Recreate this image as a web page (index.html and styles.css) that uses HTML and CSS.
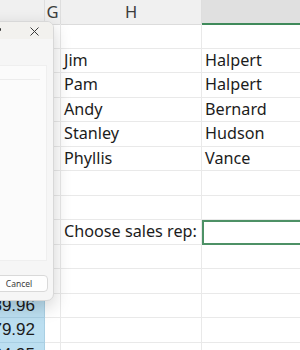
FILE: index.html
```html
<!DOCTYPE html>
<html lang="en">
<head>
    <meta charset="UTF-8">
    <meta name="viewport" content="width=device-width, initial-scale=1.0">
    <title>Sales Reps</title>
    <link rel="stylesheet" href="styles.css">
</head>
<body>
    <!-- Lembar kerja -->
    <div class="sheet">
        <div class="row head">
            <div class="cell"></div>
            <div class="cell">G</div>
            <div class="cell">H</div>
            <div class="cell active-col"></div>
        </div>
        <div class="row"><div class="cell"></div><div class="cell"></div><div class="cell"></div><div class="cell"></div></div>
        <div class="row"><div class="cell"></div><div class="cell"></div><div class="cell">Jim</div><div class="cell">Halpert</div></div>
        <div class="row"><div class="cell"></div><div class="cell"></div><div class="cell">Pam</div><div class="cell">Halpert</div></div>
        <div class="row"><div class="cell"></div><div class="cell"></div><div class="cell">Andy</div><div class="cell">Bernard</div></div>
        <div class="row"><div class="cell"></div><div class="cell"></div><div class="cell">Stanley</div><div class="cell">Hudson</div></div>
        <div class="row"><div class="cell"></div><div class="cell"></div><div class="cell">Phyllis</div><div class="cell">Vance</div></div>
        <div class="row"><div class="cell"></div><div class="cell"></div><div class="cell"></div><div class="cell"></div></div>
        <div class="row"><div class="cell"></div><div class="cell"></div><div class="cell"></div><div class="cell"></div></div>
        <div class="row"><div class="cell"></div><div class="cell"></div><div class="cell">Choose sales rep:</div><div class="cell selected"></div></div>
        <div class="row"><div class="cell"></div><div class="cell"></div><div class="cell"></div><div class="cell"></div></div>
        <div class="row"><div class="cell"></div><div class="cell"></div><div class="cell"></div><div class="cell"></div></div>
        <div class="row"><div class="cell num">89.96</div><div class="cell"></div><div class="cell"></div><div class="cell"></div></div>
        <div class="row"><div class="cell num">79.92</div><div class="cell"></div><div class="cell"></div><div class="cell"></div></div>
        <div class="row"><div class="cell num">64.95</div><div class="cell"></div><div class="cell"></div><div class="cell"></div></div>
    </div>

    <!-- Dialog di atas lembar kerja -->
    <div class="dialog">
        <div class="dialog-title">
            <span class="title-dot"></span>
            <svg class="close" width="9" height="9" viewBox="0 0 9 9">
                <path d="M0.5 0.5 L8.5 8.5 M8.5 0.5 L0.5 8.5" stroke="#3a3a3a" stroke-width="1"/>
            </svg>
        </div>
        <div class="dialog-body">
            <div class="panel">
                <div class="panel-line"></div>
            </div>
            <div class="dialog-buttons">
                <button class="cancel-btn">Cancel</button>
            </div>
        </div>
    </div>
</body>
</html>
```

FILE: styles.css
```css
/* Umum */
* {
    box-sizing: border-box;
}
body {
    margin: 0;
    width: 300px;
    height: 350px;
    overflow: hidden;
    position: relative;
    background-color: #ffffff;
    font-family: "Noto Sans", sans-serif;
    color: #1c1c1c;
}

/* Lembar kerja */
.sheet {
    width: 300px;
    overflow: hidden;
}
.row {
    display: grid;
    grid-template-columns: 45px 16px 141px 138px;
    height: 24.5px;
}
.cell {
    border-right: 1px solid #e9e9e9;
    border-bottom: 1px solid #e9e9e9;
    font-size: 16.2px;
    line-height: 23px;
    padding-left: 3px;
    white-space: nowrap;
}
.row.head {
    height: 24px;
    background-color: #f0f0f0;
}
.head .cell {
    text-align: center;
    padding-left: 0;
    color: #3c3c3c;
    font-size: 16.5px;
    line-height: 24px;
    border-bottom: 1px solid #dcdcdc;
    border-right: 1px solid #dedede;
}
.head .active-col {
    background-color: #e0e0e0;
    border-bottom: 2px solid #3f8a5a;
}
.selected {
    outline: 2px solid #4d9166;
    outline-offset: -2px;
}
.num {
    background-color: #bcdff1;
    border-right: 1px solid #a9cfe3;
    border-bottom: 1px solid #a9cfe3;
    font-family: "Liberation Sans", Arial, sans-serif;
    font-size: 17px;
    text-align: right;
    padding-right: 9px;
    padding-left: 0;
    overflow: hidden;
    direction: rtl;
}

/* Dialog */
.dialog {
    position: absolute;
    left: -70px;
    top: 21px;
    width: 124px;
    height: 280px;
    background-color: #f6f6f6;
    border: 1px solid #d8d8d8;
    border-radius: 7px;
    box-shadow: 0 6px 18px rgba(0, 0, 0, 0.18);
    display: flex;
    flex-direction: column;
    overflow: hidden;
}
.dialog-title {
    height: 19px;
    background-color: #f2f1ee;
    display: flex;
    align-items: center;
    justify-content: flex-end;
    padding-right: 14px;
    padding-top: 1px;
    gap: 29px;
}
.title-dot {
    width: 2px;
    height: 3px;
    background-color: #333;
    border-radius: 1px;
    margin-top: -4px;
}
.close {
    display: block;
}
.dialog-body {
    flex: 1;
    display: flex;
    flex-direction: column;
    padding: 26px 6px 8px 0;
}
.panel {
    height: 196px;
    background-color: #fbfbfb;
    border: 1px solid #efefef;
    padding-top: 13px;
}
.panel-line {
    border-top: 1px solid #ececec;
    margin: 0 6px 0 0;
}
.dialog-buttons {
    margin-top: 14px;
    display: flex;
    justify-content: flex-end;
}
button {
    cursor: pointer;
}
.cancel-btn {
    width: 70px;
    height: 17px;
    padding: 0;
    padding-left: 12px;
    margin-right: -1px;
    font-family: "Noto Sans", sans-serif;
    font-size: 8.5px;
    color: #3a3a3a;
    background-color: #fefefe;
    border: 1px solid #d9d9d9;
    border-radius: 4px;
}
```
